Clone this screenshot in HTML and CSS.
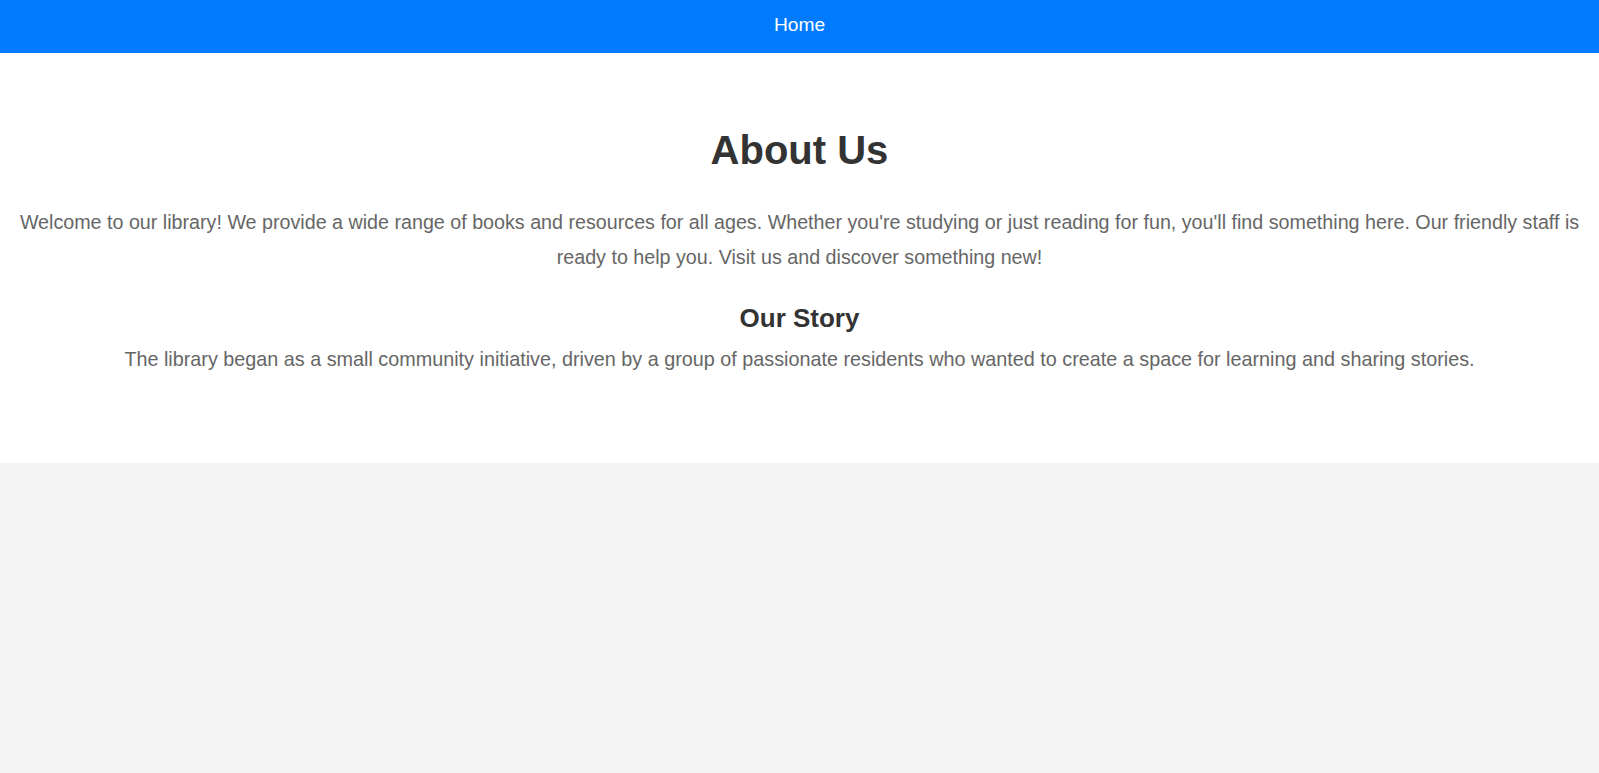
FILE: index.html
```html
<!DOCTYPE html>
<html lang="en">
<head>
<meta charset="utf-8">
<title>About Us</title>
<link rel="stylesheet" href="styles.css">
</head>
<body>
<nav class="topnav">
  <a href="#" class="topnav-link">Home</a>
</nav>
<section class="about">
  <h1 class="about-title">About Us</h1>
  <p class="about-intro">Welcome to our library! We provide a wide range of books and resources for all ages. Whether you're studying or just reading for fun, you'll find something here. Our friendly staff is ready to help you. Visit us and discover something new!</p>
  <h2 class="about-subtitle">Our Story</h2>
  <p class="about-story">The library began as a small community initiative, driven by a group of passionate residents who wanted to create a space for learning and sharing stories.</p>
</section>
</body>
</html>
```

FILE: styles.css
```css
html, body {
  margin: 0;
  padding: 0;
}

body {
  font-family: "Liberation Sans", Arial, sans-serif;
  background: #f4f4f4;
  color: #333;
}

.topnav {
  background: #007bff;
  text-align: center;
  padding: 14px 0 17px;
}

.topnav-link {
  color: #fff;
  text-decoration: none;
  font-size: 19.2px;
}

.about {
  background: #fff;
  text-align: center;
  padding: 75px 8px 88px;
}

.about-title {
  font-size: 40px;
  margin: 0 0 32px;
  color: #333;
}

.about-intro {
  font-size: 19.7px;
  line-height: 1.78;
  color: #666;
  margin: 0 0 28px;
}

.about-subtitle {
  font-size: 26px;
  margin: 0 0 9px;
  color: #333;
}

.about-story {
  font-size: 19.8px;
  line-height: 1.62;
  color: #666;
  margin: 0;
}
```
